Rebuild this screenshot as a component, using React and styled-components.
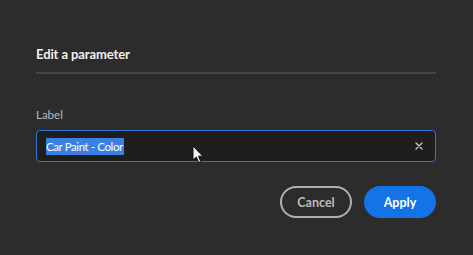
import React from 'react'
import styled, { createGlobalStyle } from 'styled-components'

const GlobalStyle = createGlobalStyle`
  html, body {
    margin: 0;
    padding: 0;
    background: #2c2c2c;
  }
  body {
    font-family: Lato, "Noto Sans", sans-serif;
    -webkit-font-smoothing: antialiased;
  }
`

const Dialog = styled.div`
  box-sizing: border-box;
  width: 473px;
  height: 255px;
  padding: 45px 37px 0 36px;
  display: flex;
  flex-direction: column;
`

const Title = styled.h2`
  margin: 0;
  font-size: 13px;
  line-height: 18px;
  font-weight: 700;
  color: #f0f0f0;
  letter-spacing: -0.1px;
`

const Divider = styled.div`
  height: 2px;
  margin-top: 9px;
  background: #464646;
`

const FieldLabel = styled.label`
  margin-top: 34px;
  font-size: 11.5px;
  line-height: 14px;
  color: #b9b9b9;
`

const Field = styled.div`
  position: relative;
  box-sizing: border-box;
  margin-top: 8px;
  height: 32px;
  display: flex;
  align-items: center;
  padding: 0 10px 0 9px;
  background: #1e1e1e;
  border: 1px solid #2f74d8;
  border-radius: 4px;
`

const Value = styled.span`
  flex: 1;
  font-size: 11.5px;
  line-height: 17px;
  letter-spacing: -0.4px;
  color: #f2f2f2;
`

const Selected = styled.span`
  display: inline-block;
  background: #3a80e4;
  color: #ffffff;
  padding: 0 1px 0 0;
`

const ClearButton = styled.button`
  border: none;
  background: none;
  padding: 0;
  width: 12px;
  height: 12px;
  display: flex;
  align-items: center;
  justify-content: center;
  cursor: pointer;
`

const Pointer = styled.svg`
  position: absolute;
  left: 155px;
  top: 14px;
  pointer-events: none;
`

const Actions = styled.div`
  margin-top: 24px;
  display: flex;
  justify-content: flex-end;
  gap: 12px;
`

const Button = styled.button`
  box-sizing: border-box;
  width: 72px;
  height: 32px;
  border-radius: 16px;
  font-family: Lato, "Noto Sans", sans-serif;
  font-size: 12.5px;
  font-weight: 700;
  cursor: pointer;
  border: 2px solid ${props => props.primary ? '#1473e6' : '#b0b0b0'};
  background: ${props => props.primary ? '#1473e6' : 'transparent'};
  color: ${props => props.primary ? '#ffffff' : '#bdbdbd'};
`

export default function App() {
  return (
    <>
      <GlobalStyle />
      <Dialog>
        <Title>Edit a parameter</Title>
        <Divider />
        <FieldLabel>Label</FieldLabel>
        <Field>
          <Value><Selected>Car Paint - Color</Selected></Value>
          <ClearButton aria-label="Clear">
            <svg width="8" height="8" viewBox="0 0 8 8">
              <path d="M1 1 L7 7 M7 1 L1 7" stroke="#c8c8c8" strokeWidth="1.3" strokeLinecap="round" />
            </svg>
          </ClearButton>
          <Pointer width="12" height="19" viewBox="0 0 12 19">
            <path d="M1 1 L1 15 L4.3 12 L6.6 17.5 L8.8 16.6 L6.5 11.2 L10.8 11.2 Z" fill="#f4f4f4" stroke="#111" strokeWidth="1" strokeLinejoin="round" />
          </Pointer>
        </Field>
        <Actions>
          <Button>Cancel</Button>
          <Button primary>Apply</Button>
        </Actions>
      </Dialog>
    </>
  )
}
